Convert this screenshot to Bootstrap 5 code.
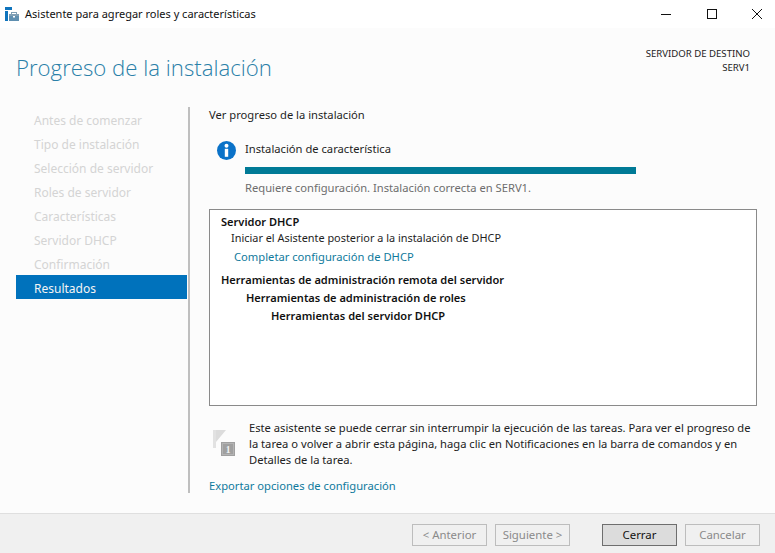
<!DOCTYPE html>
<html lang="es"><head><meta charset="utf-8"><title>Asistente</title>
<link href="https://cdn.jsdelivr.net/npm/bootstrap@5.3.0/dist/css/bootstrap.min.css" rel="stylesheet">
<style>
html,body{height:553px;overflow:hidden}
body{font-family:"Noto Sans","Open Sans",sans-serif;font-size:11.2px;line-height:16px;color:#1e1e1e;background:#fcfcfc;width:775px}
.wiz-title{height:28px;background:#fff;padding-left:4px}
.wiz-title-text{font-size:11px;margin-left:4px;color:#111}
.wiz-ctls{gap:9.5px}
.wiz-ctl{width:36px;height:24px;display:flex;align-items:center;justify-content:center}
.wiz-head{height:60px;padding:0 25px 0 16px}
.wiz-h1{font-family:"Open Sans",sans-serif;font-weight:300;font-size:22.2px;line-height:32px;color:#2a80a8;margin:24px 0 0}
.wiz-dest{font-size:9.6px;line-height:14px;text-align:right;margin-top:19px;color:#222}
.wiz-main{height:425px;padding-left:16px}
.wiz-steps{width:171px;padding-top:19px;font-size:12px;color:#d4d4d4}
.wiz-step{height:24px;line-height:28px;padding-left:18px}
.wiz-step-on{background:#0072bc;color:#f4f4f4}
.wiz-sep{width:2px;height:386px;background:#bfbfbf;margin:19px 0 0 1px}
.wiz-content{width:548px;margin-left:19px;padding-top:19px}
.wiz-notice{margin:18px 0 0 8px;gap:9px}
.wiz-bar{width:391px;height:7px;background:#007a96;margin-top:10px}
.wiz-muted{color:#6d6d6d;margin-top:6px}
.wiz-box{height:197px;border:1px solid #8a8a8a;background:#fff;margin-top:13px;padding:4px 11px;line-height:18px}
.wiz-b{font-weight:600;color:#111;font-size:11.05px}
.wiz-first{line-height:15px}
.wiz-i1{padding-left:10px;font-size:10.9px}.wiz-i2{padding-left:25px}.wiz-i3{padding-left:50px}
.wiz-i4{padding-left:13px;margin-top:1px}
.wiz-gap{margin-top:5px}
.wiz-link{color:#0f7a9c;text-decoration:none}
.wiz-tip{margin:14px 0 0 3px;gap:13px;line-height:16px;color:#222;width:541px}
.wiz-tip-icon{flex:0 0 24px;padding-top:10px}
.wiz-export{margin-top:10px}
.wiz-foot{height:40px;background:#f0f0f0;border-top:1px solid #dfdfdf;padding:10px 15px 0 412px;gap:8px}
.wiz-btn,.wiz-btn:disabled{width:75px;height:22px;padding:0;font-size:11.4px;line-height:20px;border-radius:0;border:1px solid #bdbdbd;background:#f0f0f0;color:#8a8a8a;opacity:1}
.wiz-btn-main{background:#dcdcdc;border-color:#6e6e6e;color:#111}
.wiz-btn-far{margin-left:24px}
</style></head><body>
<div class="wiz-title d-flex align-items-center">
<svg width="17" height="17" viewBox="0 0 17 17"><rect x="1" y="1" width="7" height="3" fill="#0f74bd"/><rect x="1" y="5" width="3" height="10" fill="#0f74bd"/><rect x="5" y="8" width="10" height="7" fill="#5f8fb0"/><rect x="5" y="8" width="10" height="2" fill="#7f9fb5"/><rect x="7.5" y="6.5" width="5" height="2" fill="none" stroke="#7f9fb5"/><rect x="9" y="10" width="2" height="1.5" fill="#fff"/></svg>
<span class="wiz-title-text flex-grow-1">Asistente para agregar roles y características</span>
<div class="d-flex wiz-ctls">
<span class="wiz-ctl"><svg width="12" height="12"><path d="M1 6.5H11" stroke="#111"/></svg></span>
<span class="wiz-ctl"><svg width="12" height="12"><rect x="1.5" y="1.5" width="9" height="9" fill="none" stroke="#111"/></svg></span>
<span class="wiz-ctl"><svg width="12" height="12"><path d="M1 1L11 11M11 1L1 11" stroke="#111"/></svg></span>
</div></div>
<div class="wiz-head d-flex justify-content-between">
<h1 class="wiz-h1">Progreso de la instalación</h1>
<div class="wiz-dest">SERVIDOR DE DESTINO<br>SERV1</div>
</div>
<div class="wiz-main d-flex">
<nav class="wiz-steps">
<div class="wiz-step">Antes de comenzar</div>
<div class="wiz-step">Tipo de instalación</div>
<div class="wiz-step">Selección de servidor</div>
<div class="wiz-step">Roles de servidor</div>
<div class="wiz-step">Características</div>
<div class="wiz-step">Servidor DHCP</div>
<div class="wiz-step">Confirmación</div>
<div class="wiz-step wiz-step-on">Resultados</div>
</nav>
<div class="wiz-sep"></div>
<div class="wiz-content">
<div>Ver progreso de la instalación</div>
<div class="wiz-notice d-flex">
<svg width="19" height="19" viewBox="0 0 19 19" class="flex-shrink-0"><circle cx="9.5" cy="9.5" r="9.5" fill="#0a72c8"/><circle cx="9.5" cy="4.8" r="2" fill="#fff"/><rect x="7.8" y="7.8" width="3.4" height="8" fill="#fff"/></svg>
<div class="flex-grow-1"><div>Instalación de característica</div><div class="wiz-bar"></div><div class="wiz-muted">Requiere configuración. Instalación correcta en SERV1.</div></div>
</div>
<div class="wiz-box">
<div class="wiz-b wiz-first">Servidor DHCP</div>
<div class="wiz-i1">Iniciar el Asistente posterior a la instalación de DHCP</div>
<div class="wiz-i4"><a href="#" class="wiz-link">Completar configuración de DHCP</a></div>
<div class="wiz-b wiz-gap">Herramientas de administración remota del servidor</div>
<div class="wiz-b wiz-i2">Herramientas de administración de roles</div>
<div class="wiz-b wiz-i3">Herramientas del servidor DHCP</div>
</div>
<div class="wiz-tip d-flex">
<div class="wiz-tip-icon"><svg width="24" height="28" viewBox="0 0 24 28"><rect x="1" y="0" width="3" height="18" fill="#e2e2e2"/><path d="M4 0H14L4 12Z" fill="#dcdcdc"/><rect x="9" y="12" width="14" height="14" fill="#a0a0a0"/><rect x="10.5" y="13.5" width="11" height="11" fill="none" stroke="#b4b4b4"/><text x="16" y="23" font-size="9.5" font-weight="700" text-anchor="middle" fill="#f2f2f2" font-family="Liberation Serif,serif">1</text></svg></div>
<div>Este asistente se puede cerrar sin interrumpir la ejecución de las tareas. Para ver el progreso de la tarea o volver a abrir esta página, haga clic en Notificaciones en la barra de comandos y en Detalles de la tarea.</div>
</div>
<div class="wiz-export"><a href="#" class="wiz-link">Exportar opciones de configuración</a></div>
</div>
</div>
<div class="wiz-foot d-flex">
<button class="btn wiz-btn" disabled>&lt; Anterior</button>
<button class="btn wiz-btn" disabled>Siguiente &gt;</button>
<button class="btn wiz-btn wiz-btn-main wiz-btn-far">Cerrar</button>
<button class="btn wiz-btn" disabled>Cancelar</button>
</div>
</body></html>
